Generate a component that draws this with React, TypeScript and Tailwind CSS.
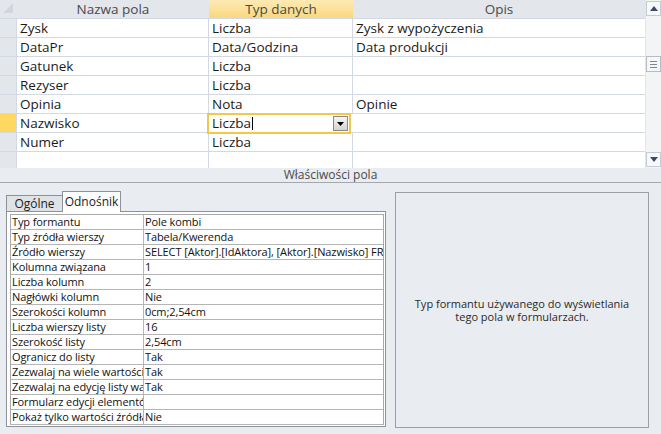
import React from 'react';

const font = "font-['Segoe_UI','Open_Sans',sans-serif]";

const fields = [
  { name: 'Zysk', type: 'Liczba', desc: 'Zysk z wypożyczenia' },
  { name: 'DataPr', type: 'Data/Godzina', desc: 'Data produkcji' },
  { name: 'Gatunek', type: 'Liczba', desc: '' },
  { name: 'Rezyser', type: 'Liczba', desc: '' },
  { name: 'Opinia', type: 'Nota', desc: 'Opinie' },
  { name: 'Nazwisko', type: 'Liczba', desc: '', selected: true },
  { name: 'Numer', type: 'Liczba', desc: '' },
  { name: '', type: '', desc: '' },
];

const props = [
  ['Typ formantu', 'Pole kombi'],
  ['Typ źródła wierszy', 'Tabela/Kwerenda'],
  ['Źródło wierszy', 'SELECT [Aktor].[IdAktora], [Aktor].[Nazwisko] FROM [Aktor];'],
  ['Kolumna związana', '1'],
  ['Liczba kolumn', '2'],
  ['Nagłówki kolumn', 'Nie'],
  ['Szerokości kolumn', '0cm;2,54cm'],
  ['Liczba wierszy listy', '16'],
  ['Szerokość listy', '2,54cm'],
  ['Ogranicz do listy', 'Tak'],
  ['Zezwalaj na wiele wartości', 'Tak'],
  ['Zezwalaj na edycję listy wartości', 'Tak'],
  ['Formularz edycji elementów listy', ''],
  ['Pokaż tylko wartości źródła wierszy', 'Nie'],
];

const Arrow: React.FC<{ up?: boolean }> = ({ up }) => (
  <svg width="8" height="5" viewBox="0 0 8 5">
    <polygon points={up ? '0,5 8,5 4,0' : '0,0 8,0 4,5'} fill="#3d4a66" />
  </svg>
);

const FieldGrid: React.FC = () => (
  <div className="flex h-[168px] bg-white">
    <div className="w-[645px] overflow-hidden">
      {/* Header */}
      <div className="flex h-[19px] border-b border-[#d3d9e3] text-[13.5px] text-[#4a4a4a]">
        <div className="relative w-[17px] bg-[#e3e6eb]">
          <svg className="absolute left-[3px] top-[3px]" width="10" height="10" viewBox="0 0 10 10">
            <polygon points="10,0 10,10 0,10" fill="#d2d6dc" />
          </svg>
        </div>
        <div className="w-[192px] bg-[#e3e6eb] flex items-center justify-center">Nazwa pola</div>
        <div className="w-[144px] bg-gradient-to-b from-[#fdeab4] to-[#f9d87c] flex items-center justify-center">
          Typ danych
        </div>
        <div className="flex-1 bg-[#e3e6eb] flex items-center justify-center">Opis</div>
      </div>
      {/* Rows */}
      {fields.map((f, i) => (
        <div key={i} className="flex h-[19px] border-b border-[#d3d9e3] text-[13.5px] text-[#1b1b1b]">
          <div
            className={`w-[17px] border-r border-[#d3d9e3] ${f.selected ? 'bg-[#ffd862]' : 'bg-[#e3e6eb]'}`}
          />
          <div className="w-[192px] border-r border-[#d3d9e3] pl-[3px] leading-[18px] whitespace-nowrap">{f.name}</div>
          {f.selected ? (
            <div className="relative w-[144px] -my-px -ml-[2px] mr-[-1px] h-[21px] border-2 border-[#f1c94a] bg-white pl-[3px] flex items-center">
              <span>{f.type}</span>
              <span className="ml-[1px] w-px h-[13px] bg-black" />
              <div className="absolute right-[1px] top-[1px] w-[15px] h-[15px] border border-[#8a8a8a] bg-gradient-to-b from-[#f4f4f4] to-[#d4d4d4] flex items-center justify-center">
                <svg width="7" height="4" viewBox="0 0 7 4">
                  <polygon points="0,0 7,0 3.5,4" fill="#000" />
                </svg>
              </div>
            </div>
          ) : (
            <div className="w-[144px] border-r border-[#d3d9e3] pl-[3px] leading-[18px] whitespace-nowrap">{f.type}</div>
          )}
          <div className="flex-1 pl-[3px] leading-[18px] whitespace-nowrap">{f.desc}</div>
        </div>
      ))}
    </div>
    {/* Scrollbar */}
    <div className="w-[16px] bg-[#f3f4f6] border-l border-[#e2e5ea] flex flex-col items-center">
      <div className="mt-px w-[15px] h-[15px] border border-[#c7ccd4] bg-[#f7f8f9] flex items-center justify-center">
        <Arrow up />
      </div>
      <div className="mt-[40px] w-[15px] h-[16px] border border-[#b7bcc4] bg-[#f6f7f8] flex flex-col items-center justify-center gap-[2px]">
        <div className="w-[7px] h-px bg-[#7c8594]" />
        <div className="w-[7px] h-px bg-[#7c8594]" />
        <div className="w-[7px] h-px bg-[#7c8594]" />
      </div>
      <div className="mt-auto mb-px w-[15px] h-[15px] border border-[#c7ccd4] bg-[#f7f8f9] flex items-center justify-center">
        <Arrow />
      </div>
    </div>
  </div>
);

const PropertiesPanel: React.FC = () => (
  <div className="flex pl-[6px] pt-[8px]">
    <div className="w-[380px]">
      {/* Tabs */}
      <div className="flex items-end h-[20px] text-[12px]">
        <div className="w-[57px] h-[16px] border border-b-0 border-[#8e9196] bg-[#dfe2e7] text-[#222] flex items-center justify-center">
          Ogólne
        </div>
        <div className="relative z-10 -mb-px w-[59px] h-[21px] -ml-px border border-b-0 border-[#8e9196] bg-white text-[#222] flex items-center justify-center">
          Odnośnik
        </div>
      </div>
      {/* Sheet */}
      <div className="h-[216px] border border-[#8e9196] bg-white pl-[3px] pt-[2px] pr-[1px]">
        <div className="border border-[#a9a9a9] border-b-0">
          {props.map(([label, value]) => (
            <div key={label} className="flex h-[15px] border-b border-[#b5b5b5] text-[11px] tracking-[-0.1px] text-[#111] leading-[14px]">
              <div className="w-[133px] border-r border-[#b5b5b5] pl-[1px] overflow-hidden whitespace-nowrap">{label}</div>
              <div className="flex-1 pl-[1px] overflow-hidden whitespace-nowrap">{value}</div>
            </div>
          ))}
        </div>
      </div>
    </div>
    {/* Description */}
    <div className="ml-[9px] mt-px w-[254px] h-[236px] border border-[#9c9fa4] flex items-center justify-center text-center text-[11px] leading-[13px] text-[#2b2b2b]">
      <p className="whitespace-nowrap">
        Typ formantu używanego do wyświetlania
        <br />
        tego pola w formularzach.
      </p>
    </div>
  </div>
);

export default function App() {
  return (
    <div className={`w-[661px] h-[434px] overflow-hidden bg-[#e9ecf0] ${font}`}>
      <FieldGrid />
      <div className="h-[15px] border-b border-[#a4a7ab] text-[12px] leading-[14px] text-[#4a4a4a] text-center">
        Właściwości pola
      </div>
      <PropertiesPanel />
    </div>
  );
}
